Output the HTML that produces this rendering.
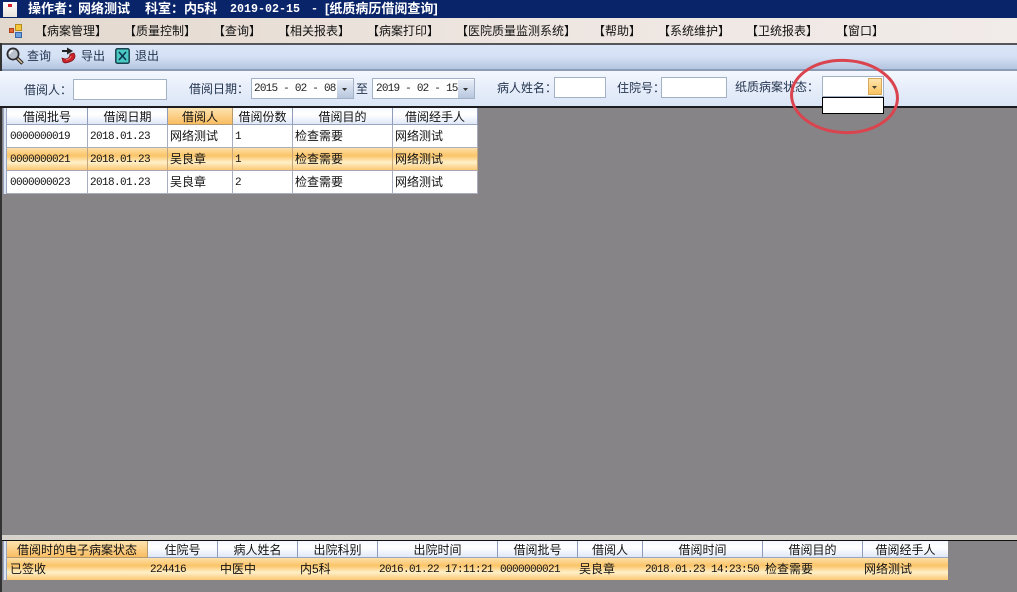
<!DOCTYPE html>
<html lang="zh">
<head>
<meta charset="utf-8">
<style>
html,body{margin:0;padding:0;width:1017px;height:592px;overflow:hidden;background:#868486}
body{position:relative;font:12px/14px "Liberation Sans","WenQuanYi Zen Hei","Noto Sans CJK SC",sans-serif;color:#000}
div{position:absolute;white-space:nowrap;box-sizing:border-box}
.m{top:24px;color:#111;height:14px}
.l{color:#24344f}
.t{top:2px;color:#fff;font-weight:bold;font-size:13px}
.tm{top:2px;color:#fff;font:bold 11.67px/14px "Liberation Mono",monospace}
.n{font-family:"Liberation Mono","WenQuanYi Zen Hei",monospace;font-size:11px;letter-spacing:-.6px}
.h{background:linear-gradient(#f4f7fe,#fff 40%,#dfe8f8);border-right:1px solid #8f9bb8;border-bottom:1px solid #9aa5bf;text-align:center;line-height:18px;color:#111}
.ho{background:linear-gradient(#fde3b0,#f9bd62);border-right:1px solid #b59a70;border-bottom:1px solid #b59a70;text-align:center;line-height:18px;color:#111}
.c{background:#fff;border-right:1px solid #a9aebf;border-bottom:1px solid #a9aebf;line-height:22px;padding-left:2px;color:#111}
.o{background:linear-gradient(#fddfa8,#fbc468 35%,#fff0c8 65%,#fbc874);border-right:1px solid #c5a67c;border-bottom:1px solid #aaa3b5;line-height:22px;padding-left:2px;color:#111}
.c.n,.o.n{line-height:25px}
.box{background:#fff;border:1px solid #a3b1c6}
.tx{line-height:22px;top:558px;color:#111}
.tx.n{line-height:25px}
.d{color:#222;letter-spacing:-.77px}
</style>
</head>
<body>
<!-- title bar -->
<div style="left:0;top:0;width:1017px;height:18px;background:#0a246a"></div>
<div style="left:3px;top:2px;width:14px;height:15px;background:linear-gradient(#fff,#e8e2da)"></div>
<div style="left:8px;top:4px;width:4px;height:3px;background:#d3202a"></div>
<div class="t" style="left:28px">操作者：</div>
<div class="t" style="left:78px">网络测试</div>
<div class="t" style="left:145px">科室：</div>
<div class="t" style="left:184px">内5科</div>
<div class="tm" style="left:230px">2019-02-15</div>
<div class="tm" style="left:311px">-</div>
<div class="t" style="left:325px">[纸质病历借阅查询]</div>

<!-- menu bar -->
<div style="left:0;top:18px;width:1017px;height:25px;background:linear-gradient(90deg,#e2d8cd,#eee5e0 50%,#f1ebe9)"></div>
<svg style="position:absolute;left:9px;top:24px" width="14" height="15" viewBox="0 0 14 15">
<rect x="0.5" y="4.5" width="4" height="4" fill="#e2622f" stroke="#b0401a"/>
<rect x="6.5" y="0.5" width="6" height="6" fill="#f5c83c" stroke="#b58a1e"/>
<rect x="6.5" y="8.5" width="6" height="5" fill="#6ea0e0" stroke="#3a66a8"/>
</svg>
<div class="m" style="left:35px">【病案管理】</div>
<div class="m" style="left:124px">【质量控制】</div>
<div class="m" style="left:213px">【查询】</div>
<div class="m" style="left:278px">【相关报表】</div>
<div class="m" style="left:367px">【病案打印】</div>
<div class="m" style="left:456px">【医院质量监测系统】</div>
<div class="m" style="left:593px">【帮助】</div>
<div class="m" style="left:658px">【系统维护】</div>
<div class="m" style="left:746px">【卫统报表】</div>
<div class="m" style="left:836px">【窗口】</div>
<div style="left:0;top:43px;width:1017px;height:2px;background:#55555a"></div>

<!-- toolbar -->
<div style="left:0;top:45px;width:1017px;height:24px;background:linear-gradient(#dbe6f8,#d4e0f4 50%,#b4c5e0)"></div>
<div style="left:0;top:69px;width:1017px;height:2px;background:#8a9cb8"></div>
<div style="left:0;top:43px;width:2px;height:549px;background:#333"></div>
<svg style="position:absolute;left:6px;top:47px" width="18" height="18" viewBox="0 0 18 18">
<path d="M11 11l5.500 5.500" stroke="#2c2620" stroke-width="3.600"/>
<path d="M11.500 11.500l4.500 4.500" stroke="#d8c8a8" stroke-width="1.400"/>
<circle cx="7" cy="7" r="5.600" fill="#b9c2cc" stroke="#2a2a2e" stroke-width="1.700"/>
<path d="M3.800 7a3.200 3.200 0 0 1 3.200-3.200" stroke="#f4f6fa" stroke-width="1.600" fill="none"/>
</svg>
<div class="l" style="left:27px;top:49px">查询</div>
<svg style="position:absolute;left:61px;top:47px" width="17" height="17" viewBox="0 0 17 17">
<path d="M1 4h7" stroke="#222" stroke-width="2"/>
<path d="M6 0.500l6 3.500-6 3.500z" fill="#222"/>
<path d="M13 6c3 5-1 9-9 10l-2-1-1-4 3 1c3 0 5-2 5-5z" fill="#c9232b" stroke="#7a1015" stroke-width=".7"/>
<path d="M10 9c0 2-2 3-5 4" stroke="#ee7a70" stroke-width="1" fill="none"/>
</svg>
<div class="l" style="left:81px;top:49px">导出</div>
<svg style="position:absolute;left:115px;top:48px" width="15" height="16" viewBox="0 0 15 16">
<rect x="0.800" y="0.800" width="13.400" height="14.400" rx="1.500" fill="#49c8c4" stroke="#17424e" stroke-width="1.500"/>
<path d="M4 4l7 8M11 4l-7 8" stroke="#10304a" stroke-width="1.500"/>
</svg>
<div class="l" style="left:135px;top:49px">退出</div>

<!-- filter -->
<div style="left:0;top:71px;width:1017px;height:35px;background:linear-gradient(#f4f7fe,#dae5f6)"></div>
<div style="left:0;top:106px;width:1017px;height:2px;background:#1c1c20"></div>
<div class="l" style="left:24px;top:83px">借阅人：</div>
<div class="box" style="left:73px;top:79px;width:94px;height:21px"></div>
<div class="l" style="left:189px;top:82px">借阅日期：</div>
<div class="box" style="left:251px;top:78px;width:103px;height:21px"></div>
<div class="n d" style="left:254px;top:82px">2015 - 02 - 08</div>
<div style="left:337px;top:80px;width:16px;height:18px;background:linear-gradient(#e8eef8,#b8c7de)"></div>
<svg style="position:absolute;left:341px;top:87px" width="8" height="5"><path d="M1 1h5l-2.500 3z" fill="#333"/></svg>
<div class="l" style="left:356px;top:82px">至</div>
<div class="box" style="left:372px;top:78px;width:103px;height:21px"></div>
<div class="n d" style="left:376px;top:82px">2019 - 02 - 15</div>
<div style="left:458px;top:80px;width:16px;height:18px;background:linear-gradient(#e8eef8,#b8c7de)"></div>
<svg style="position:absolute;left:462px;top:87px" width="8" height="5"><path d="M1 1h5l-2.500 3z" fill="#333"/></svg>
<div class="l" style="left:497px;top:81px">病人姓名：</div>
<div class="box" style="left:554px;top:77px;width:52px;height:21px"></div>
<div class="l" style="left:617px;top:81px">住院号：</div>
<div class="box" style="left:661px;top:77px;width:66px;height:21px"></div>
<div class="l" style="left:735px;top:80px">纸质病案状态：</div>
<div class="box" style="left:822px;top:76px;width:62px;height:21px"></div>
<div style="left:868px;top:78px;width:14px;height:17px;background:linear-gradient(#fde5ae,#fbc25f);border:1px solid #d6a858"></div>
<svg style="position:absolute;left:871px;top:85px" width="8" height="5"><path d="M1 1h5l-2.500 3z" fill="#443"/></svg>
<div style="left:822px;top:97px;width:62px;height:17px;background:#fff;border:1px solid #000"></div>

<!-- top grid -->
<div style="left:3px;top:108px;width:4px;height:86px;background:#dfe6f4;border-left:1px solid #9aa5bf;border-right:1px solid #9aa5bf"></div>
<div class="h" style="left:7px;top:108px;width:81px;height:17px">借阅批号</div>
<div class="h" style="left:88px;top:108px;width:80px;height:17px">借阅日期</div>
<div class="ho" style="left:168px;top:108px;width:65px;height:17px">借阅人</div>
<div class="h" style="left:233px;top:108px;width:60px;height:17px">借阅份数</div>
<div class="h" style="left:293px;top:108px;width:100px;height:17px">借阅目的</div>
<div class="h" style="left:393px;top:108px;width:85px;height:17px">借阅经手人</div>

<div class="c n" style="left:7px;top:125px;width:81px;height:23px;padding-left:3px">0000000019</div>
<div class="c n" style="left:88px;top:125px;width:80px;height:23px">2018.01.23</div>
<div class="c" style="left:168px;top:125px;width:65px;height:23px">网络测试</div>
<div class="c n" style="left:233px;top:125px;width:60px;height:23px">1</div>
<div class="c" style="left:293px;top:125px;width:100px;height:23px">检查需要</div>
<div class="c" style="left:393px;top:125px;width:85px;height:23px">网络测试</div>

<div class="o n" style="left:7px;top:148px;width:81px;height:23px;padding-left:3px">0000000021</div>
<div class="o n" style="left:88px;top:148px;width:80px;height:23px">2018.01.23</div>
<div class="o" style="left:168px;top:148px;width:65px;height:23px">吴良章</div>
<div class="o n" style="left:233px;top:148px;width:60px;height:23px">1</div>
<div class="o" style="left:293px;top:148px;width:100px;height:23px">检查需要</div>
<div class="o" style="left:393px;top:148px;width:85px;height:23px">网络测试</div>

<div class="c n" style="left:7px;top:171px;width:81px;height:23px;padding-left:3px">0000000023</div>
<div class="c n" style="left:88px;top:171px;width:80px;height:23px">2018.01.23</div>
<div class="c" style="left:168px;top:171px;width:65px;height:23px">吴良章</div>
<div class="c n" style="left:233px;top:171px;width:60px;height:23px">2</div>
<div class="c" style="left:293px;top:171px;width:100px;height:23px">检查需要</div>
<div class="c" style="left:393px;top:171px;width:85px;height:23px">网络测试</div>

<!-- splitter -->
<div style="left:2px;top:535px;width:1015px;height:5px;background:#d6d2cc"></div>
<div style="left:2px;top:540px;width:1015px;height:1px;background:#111"></div>

<!-- bottom grid -->
<div style="left:3px;top:541px;width:4px;height:39px;background:#dfe6f4;border-left:1px solid #9aa5bf;border-right:1px solid #9aa5bf"></div>
<div class="ho" style="left:7px;top:541px;width:141px;height:17px">借阅时的电子病案状态</div>
<div class="h" style="left:148px;top:541px;width:70px;height:17px">住院号</div>
<div class="h" style="left:218px;top:541px;width:80px;height:17px">病人姓名</div>
<div class="h" style="left:298px;top:541px;width:80px;height:17px">出院科别</div>
<div class="h" style="left:378px;top:541px;width:120px;height:17px">出院时间</div>
<div class="h" style="left:498px;top:541px;width:80px;height:17px">借阅批号</div>
<div class="h" style="left:578px;top:541px;width:65px;height:17px">借阅人</div>
<div class="h" style="left:643px;top:541px;width:120px;height:17px">借阅时间</div>
<div class="h" style="left:763px;top:541px;width:100px;height:17px">借阅目的</div>
<div class="h" style="left:863px;top:541px;width:85px;height:17px;border-right:0">借阅经手人</div>

<div style="left:7px;top:558px;width:941px;height:22px;background:linear-gradient(#fddfa8,#fbc468 35%,#fff0c8 65%,#fbc874)"></div>
<div class="tx" style="left:10px">已签收</div>
<div class="tx n" style="left:150px">224416</div>
<div class="tx" style="left:220px">中医中</div>
<div class="tx" style="left:300px">内5科</div>
<div class="tx n" style="left:379px">2016.01.22 17:11:21</div>
<div class="tx n" style="left:500px">0000000021</div>
<div class="tx" style="left:579px">吴良章</div>
<div class="tx n" style="left:645px">2018.01.23 14:23:50</div>
<div class="tx" style="left:765px">检查需要</div>
<div class="tx" style="left:864px">网络测试</div>

<!-- annotation -->
<svg style="position:absolute;left:780px;top:50px" width="130" height="95" viewBox="780 50 130 95">
<ellipse cx="844.500" cy="96.500" rx="53" ry="36" fill="none" stroke="#d9444e" stroke-width="3" transform="rotate(3 844.500 96.500)"/>
</svg>
</body>
</html>
